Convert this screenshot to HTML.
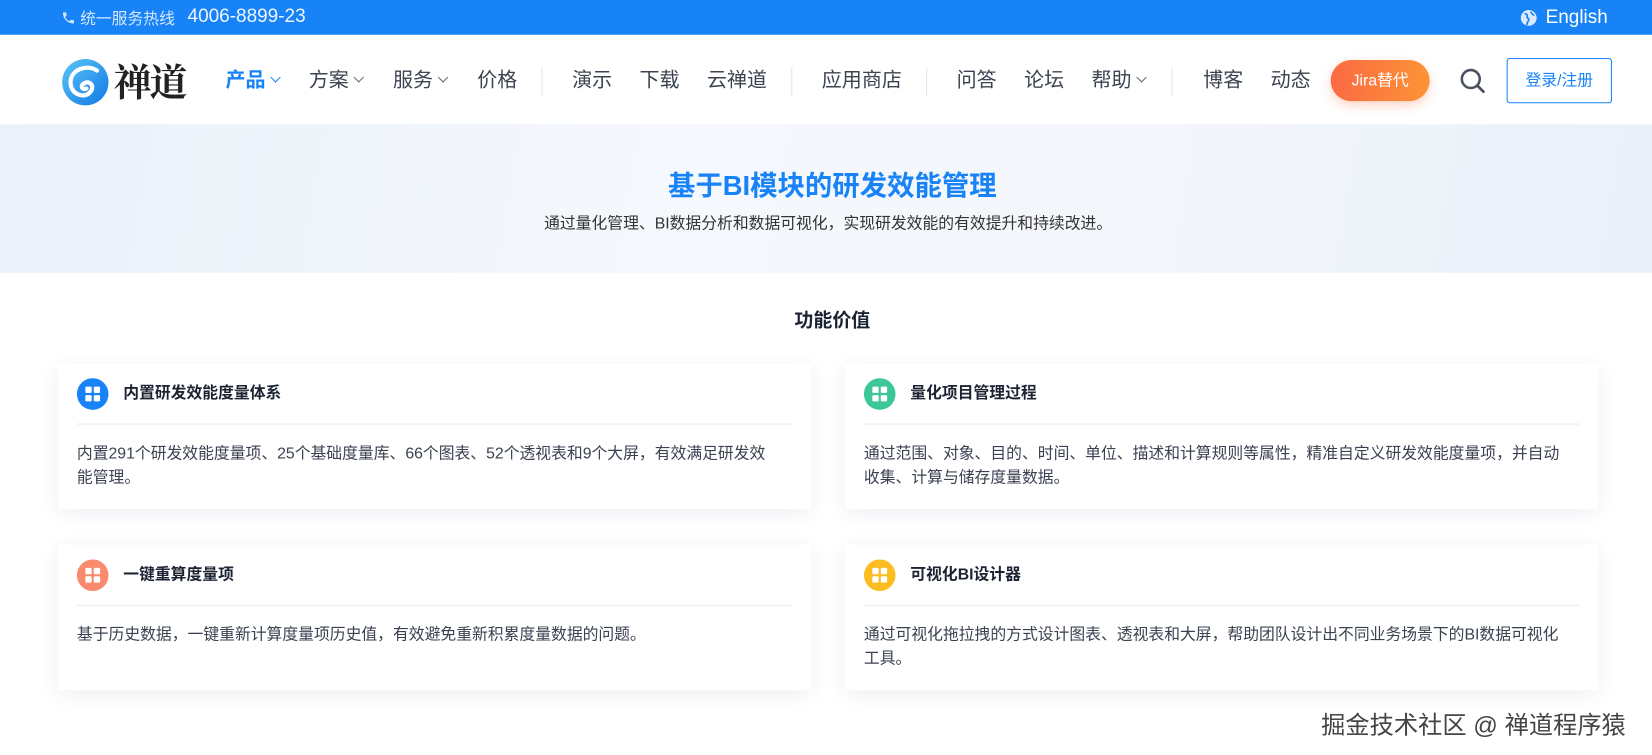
<!DOCTYPE html>
<html><head><meta charset="utf-8"><style>
*{margin:0;padding:0;box-sizing:border-box}
body{width:1652px;height:755px;overflow:hidden;background:#fff;font-family:"Liberation Sans","Noto Sans CJK SC",sans-serif;color:#333}
#w{position:absolute;left:0;top:0;width:1568px;height:717px;transform:scale(1.05357);transform-origin:0 0}
.abs{position:absolute;white-space:nowrap}
.top{position:absolute;left:0;top:0;width:1568px;height:33px;background:#1783f7}
.nav{font-size:19px;color:#3c4350;top:64px;line-height:26px}
.sep{position:absolute;top:64px;width:1px;height:28px;background:#e3e6ea}
.chev{display:inline-block;width:7px;height:7px;border-right:1.3px solid #666;border-bottom:1.3px solid #666;transform:rotate(45deg);margin-left:6px;vertical-align:5px}
.hero{position:absolute;left:0;top:118px;width:1568px;height:141px;background:linear-gradient(100deg,#eaf1fa 0%,#f5f8fc 40%,#f3f6fb 70%,#e9f0fa 100%)}
.card{position:absolute;width:715px;height:138px;background:#fff;box-shadow:0 4px 18px rgba(30,60,120,.08);border-radius:2px}
.card .ic{position:absolute;left:18px;top:14px;width:30px;height:30px;border-radius:50%}
.card .ic i{position:absolute;width:6px;height:6px;background:#fff;border-radius:1px}
.card h3{position:absolute;left:62px;top:17px;font-size:15px;font-weight:bold;color:#1c2333}
.card .ln{position:absolute;left:18px;right:18px;top:57px;height:1px;background:#e8eaee}
.card p{position:absolute;left:18px;right:16px;top:74px;font-size:15px;line-height:23px;color:#3a4150}
</style></head><body><div id="w">
<div class="top"></div>
<svg class="abs" style="left:58px;top:10px" width="14" height="14" viewBox="0 0 24 24"><path d="M6.6 10.8a15 15 0 006.6 6.6l2.2-2.2c.3-.3.7-.4 1-.2 1.1.4 2.3.6 3.6.6.6 0 1 .4 1 1V20c0 .6-.4 1-1 1A17 17 0 013 4c0-.6.4-1 1-1h3.5c.6 0 1 .4 1 1 0 1.3.2 2.5.6 3.6.1.3 0 .7-.2 1z" fill="#cfe3fd"/></svg>
<div class="abs" style="left:76px;top:7px;font-size:15px;color:#d5e7fd">统一服务热线</div>
<div class="abs" style="left:178px;top:5px;font-size:18px;color:#eef5ff">4006-8899-23</div>
<svg class="abs" style="left:1443px;top:9px" width="16" height="16" viewBox="0 0 16 16"><circle cx="8" cy="8" r="7.5" fill="#dbeafe"/><path d="M4 4c2 0 3 1 2.5 3S9 8 8 10s-2 3-2 5M10 2c0 2 2 2 3 4" stroke="#1783f7" stroke-width="1.6" fill="none"/></svg>
<div class="abs" style="left:1467px;top:6px;font-size:18px;color:#fff">English</div>

<svg class="abs" style="left:58px;top:55px" width="46" height="46" viewBox="0 0 46 46"><defs><linearGradient id="g" x1="0" y1="0" x2="1" y2="1"><stop offset="0" stop-color="#5bc6f7"/><stop offset="1" stop-color="#1277e6"/></linearGradient></defs><circle cx="23" cy="23" r="22" fill="url(#g)"/><path d="M34 12c-8-6-24-2-25 10s12 17 18 11 0-12-5-9-1 7 2 5" stroke="#fff" stroke-width="4" fill="none" stroke-linecap="round"/></svg>
<div class="abs" style="left:108px;top:56px;font-family:'Noto Serif CJK SC',serif;font-size:36px;font-weight:bold;color:#222;letter-spacing:-2px;line-height:42px">禅道</div>

<div class="abs nav" style="left:214px;color:#1783f7;font-weight:bold">产品<span class="chev" style="border-color:#1783f7"></span></div>
<div class="abs nav" style="left:293px">方案<span class="chev"></span></div>
<div class="abs nav" style="left:373px">服务<span class="chev"></span></div>
<div class="abs nav" style="left:453px">价格</div>
<div class="sep" style="left:514px"></div>
<div class="abs nav" style="left:543px">演示</div>
<div class="abs nav" style="left:607px">下载</div>
<div class="abs nav" style="left:671px">云禅道</div>
<div class="sep" style="left:751px"></div>
<div class="abs nav" style="left:780px">应用商店</div>
<div class="sep" style="left:879px"></div>
<div class="abs nav" style="left:908px">问答</div>
<div class="abs nav" style="left:972px">论坛</div>
<div class="abs nav" style="left:1036px">帮助<span class="chev"></span></div>
<div class="sep" style="left:1112px"></div>
<div class="abs nav" style="left:1142px">博客</div>
<div class="abs nav" style="left:1206px">动态</div>
<div class="abs" style="left:1263px;top:57px;width:94px;height:39px;border-radius:20px;background:linear-gradient(90deg,#fb6a45,#fd9435);color:#fff;font-size:15px;text-align:center;line-height:39px;box-shadow:0 4px 10px rgba(251,110,60,.3)">Jira替代</div>
<svg class="abs" style="left:1385px;top:64px" width="26" height="26" viewBox="0 0 26 26"><circle cx="11" cy="11" r="8.5" stroke="#4a5260" stroke-width="2.4" fill="none"/><path d="M17.5 17.5L23 23" stroke="#4a5260" stroke-width="2.6" stroke-linecap="round"/></svg>
<div class="abs" style="left:1430px;top:55px;width:100px;height:43px;border:1px solid #1783f7;border-radius:3px;color:#1783f7;font-size:15px;text-align:center;line-height:41px">登录/注册</div>

<div class="hero"></div>
<div class="abs" style="left:0;width:1580px;text-align:center;top:156px;font-size:26px;font-weight:bold;color:#1783f7">基于BI模块的研发效能管理</div>
<div class="abs" style="left:0;width:1572px;text-align:center;top:201px;font-size:15px;color:#333">通过量化管理、BI数据分析和数据可视化，实现研发效能的有效提升和持续改进。</div>
<div class="abs" style="left:0;width:1580px;text-align:center;top:290px;font-size:18px;font-weight:bold;color:#1c2333">功能价值</div>

<div class="card" style="left:55px;top:345px"><div class="ic" style="background:#1783f7"><i style="left:8px;top:8px"></i><i style="left:16px;top:8px"></i><i style="left:8px;top:16px"></i><i style="left:16px;top:16px"></i></div><h3>内置研发效能度量体系</h3><div class="ln"></div><p>内置291个研发效能度量项、25个基础度量库、66个图表、52个透视表和9个大屏，有效满足研发效<br>能管理。</p></div>
<div class="card" style="left:802px;top:345px"><div class="ic" style="background:#3ec796"><i style="left:8px;top:8px"></i><i style="left:16px;top:8px"></i><i style="left:8px;top:16px"></i><i style="left:16px;top:16px"></i></div><h3>量化项目管理过程</h3><div class="ln"></div><p>通过范围、对象、目的、时间、单位、描述和计算规则等属性，精准自定义研发效能度量项，并自动<br>收集、计算与储存度量数据。</p></div>
<div class="card" style="left:55px;top:517px"><div class="ic" style="background:#f98a6e"><i style="left:8px;top:8px"></i><i style="left:16px;top:8px"></i><i style="left:8px;top:16px"></i><i style="left:16px;top:16px"></i></div><h3>一键重算度量项</h3><div class="ln"></div><p>基于历史数据，一键重新计算度量项历史值，有效避免重新积累度量数据的问题。</p></div>
<div class="card" style="left:802px;top:517px"><div class="ic" style="background:#fbbd22"><i style="left:8px;top:8px"></i><i style="left:16px;top:8px"></i><i style="left:8px;top:16px"></i><i style="left:16px;top:16px"></i></div><h3>可视化BI设计器</h3><div class="ln"></div><p>通过可视化拖拉拽的方式设计图表、透视表和大屏，帮助团队设计出不同业务场景下的BI数据可视化<br>工具。</p></div>

<div class="abs" style="left:1254px;top:669px;font-size:23px;color:#444;text-shadow:0 0 2px #fff">掘金技术社区 @ 禅道程序猿</div>
</div></body></html>
